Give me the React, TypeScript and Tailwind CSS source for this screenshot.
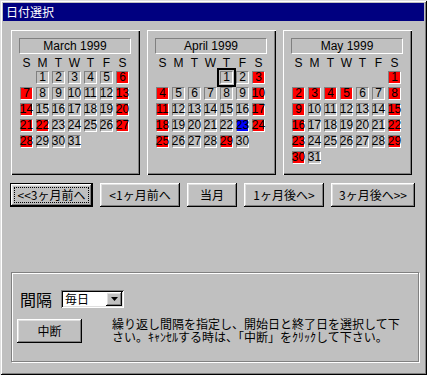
import React from 'react';

type Month = {
  name: string;
  offset: number;
  days: number;
  red: number[];
  blue?: number[];
  today?: number;
};

const months: Month[] = [
  { name: 'March 1999', offset: 1, days: 31, red: [6, 7, 13, 14, 20, 21, 22, 27, 28] },
  { name: 'April 1999', offset: 4, days: 30, red: [3, 4, 10, 11, 17, 18, 24, 25, 29], blue: [23], today: 1 },
  { name: 'May 1999', offset: 6, days: 31, red: [1, 2, 3, 4, 5, 8, 9, 15, 16, 22, 23, 29, 30] },
];

const weekdays = ['S', 'M', 'T', 'W', 'T', 'F', 'S'];

const jp = "font-['Noto_Sans_CJK_JP','Liberation_Sans',sans-serif]";
const raised =
  'shadow-[inset_-1px_-1px_#000,inset_1px_1px_#fff,inset_-2px_-2px_#808080,inset_2px_2px_#dfdfdf]';

function MonthPanel({ month }: { month: Month }) {
  const cells: (number | null)[] = [];
  for (let i = 0; i < month.offset; i++) cells.push(null);
  for (let d = 1; d <= month.days; d++) cells.push(d);

  return (
    <div className="w-[129px] h-[145px] bg-[#c0c0c0] pt-[8px] pl-[8px] flex flex-col shadow-[inset_1px_1px_#fff,inset_-1px_-1px_#000,inset_-2px_-2px_#808080]">
      <div className="w-[112px] h-[16px] border border-t-[#808080] border-l-[#808080] border-b-white border-r-white flex items-center justify-center text-[12px] leading-[14px] text-black font-['Liberation_Sans',sans-serif]">
        {month.name}
      </div>
      <div className="grid grid-cols-[repeat(7,16px)] ml-[1px] h-[17px] items-center">
        {weekdays.map((w, i) => (
          <div key={i} className="w-[13px] text-center text-[12px] leading-[12px] text-black font-['Liberation_Sans',sans-serif]">
            {w}
          </div>
        ))}
      </div>
      <div className="grid grid-cols-[repeat(7,16px)] auto-rows-[16px] ml-[1px]">
        {cells.map((d, i) => {
          if (d === null) return <div key={i} />;
          const isRed = month.red.includes(d);
          const isBlue = month.blue?.includes(d);
          const isToday = month.today === d;
          return (
            <div
              key={i}
              className={`w-[13px] h-[13px] border border-t-[#808080] border-l-[#808080] border-b-white border-r-white flex items-center justify-center text-[12px] leading-[11px] text-black font-['Liberation_Sans',sans-serif] whitespace-nowrap ${
                isBlue ? 'bg-[#0000ff]' : isRed ? 'bg-[#ff0000]' : 'bg-[#c0c0c0]'
              } ${isToday ? 'outline-2 outline-black outline-offset-[1px]' : ''}`}
            >
              {d}
            </div>
          );
        })}
      </div>
    </div>
  );
}

function NavButton({ label, width, isDefault }: { label: string; width: string; isDefault?: boolean }) {
  return (
    <div
      className={`${width} h-[24px] bg-[#c0c0c0] flex items-center justify-center text-[12px] leading-[14px] text-black ${jp} ${
        isDefault
          ? 'border border-black shadow-[inset_-1px_-1px_#000,inset_1px_1px_#fff,inset_-2px_-2px_#808080,inset_2px_2px_#dfdfdf]'
          : raised
      }`}
    >
      {isDefault ? (
        <span className="border border-dotted border-black px-[2px] py-[2px] w-[calc(100%-6px)] h-[calc(100%-6px)] flex items-center justify-center">
          {label}
        </span>
      ) : (
        label
      )}
    </div>
  );
}

export default function App() {
  return (
    <div className="w-[427px] h-[375px] bg-[#c0c0c0] p-[3px] flex flex-col overflow-hidden shadow-[inset_1px_1px_#dfdfdf,inset_-1px_-1px_#000,inset_2px_2px_#fff,inset_-2px_-2px_#808080]">
      <div className={`h-[18px] bg-[#000080] text-white text-[12px] leading-[18px] pl-[3px] ${jp}`}>日付選択</div>

      <div className="flex gap-[7px] mt-[9px] ml-[8px]">
        {months.map((m) => (
          <MonthPanel key={m.name} month={m} />
        ))}
      </div>

      <div className="flex gap-[7px] mt-[8px] ml-[7px]">
        <NavButton label="<<3ヶ月前へ" width="w-[83px]" isDefault />
        <NavButton label="<1ヶ月前へ" width="w-[80px]" />
        <NavButton label="当月" width="w-[50px]" />
        <NavButton label="1ヶ月後へ>" width="w-[80px]" />
        <NavButton label="3ヶ月後へ>>" width="w-[84px]" />
      </div>

      <div className="mt-[65px] ml-[8px] w-[408px] h-[90px] border border-[#808080] shadow-[inset_1px_1px_#fff,1px_1px_#fff] pt-[17px] pl-[5px] flex flex-col">
        <div className="flex items-center pl-[3px]">
          <span className={`text-[16px] leading-[18px] text-black ${jp}`}>間隔</span>
          <div className="ml-[9px] w-[63px] h-[18px] bg-white flex items-center shadow-[inset_1px_1px_#808080,inset_-1px_-1px_#fff,inset_2px_2px_#000,inset_-2px_-2px_#dfdfdf] p-[2px]">
            <span className={`flex-1 pl-[2px] text-[12px] leading-[14px] text-black ${jp}`}>毎日</span>
            <div className={`w-[16px] h-[14px] bg-[#c0c0c0] flex items-center justify-center ${raised}`}>
              <svg width="7" height="4" viewBox="0 0 7 4">
                <path d="M0 0h7L3.5 4z" fill="#000" />
              </svg>
            </div>
          </div>
        </div>
        <div className="flex mt-[11px]">
          <div className={`w-[65px] h-[24px] bg-[#c0c0c0] flex items-center justify-center text-[12px] leading-[14px] text-black ${jp} ${raised}`}>
            中断
          </div>
          <div className={`ml-[30px] -mt-[2px] flex flex-col text-[12px] text-black whitespace-nowrap ${jp}`}>
            <div className="h-[13px] leading-[13px]">繰り返し間隔を指定し、開始日と終了日を選択して下</div>
            <div className="h-[13px] leading-[13px]">さい。ｷｬﾝｾﾙする時は、「中断」をｸﾘｯｸして下さい。</div>
          </div>
        </div>
      </div>
    </div>
  );
}
